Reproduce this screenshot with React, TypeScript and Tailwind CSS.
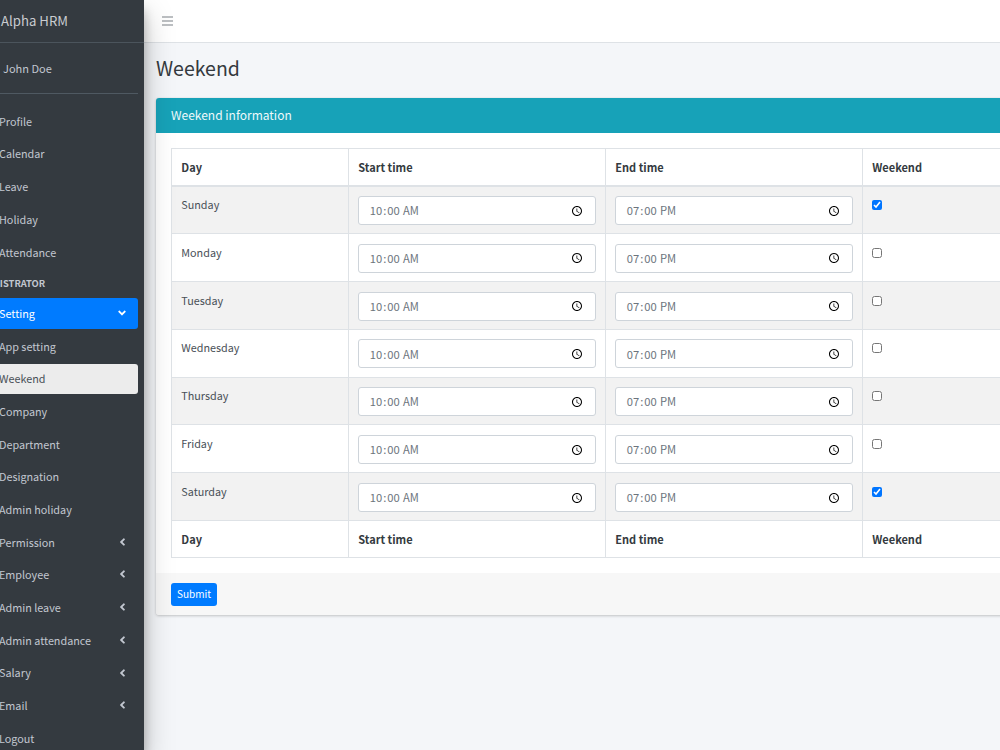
import React from "react";
import { FaAngleLeft, FaAngleDown } from "react-icons/fa";

const days: [string, boolean][] = [
  ["Sunday", true],
  ["Monday", false],
  ["Tuesday", false],
  ["Wednesday", false],
  ["Thursday", false],
  ["Friday", false],
  ["Saturday", true],
];

function NavItem({ label, arrow }: { label: string; arrow?: boolean }) {
  return (
    <a className="flex items-center justify-between h-[30.7px] mb-[2px] pb-[1px] pl-[105px] pr-[11px] text-[#c2c7d0]">
      <span>{label}</span>
      {arrow && <FaAngleLeft className="w-[9px] h-[12px] text-[#c2c7d0]" />}
    </a>
  );
}

function HeadRow({ top }: { top?: boolean }) {
  const c = "h-[37px] px-[9.3px] text-left align-middle font-bold text-[11px] text-[#343a40] border border-[#dee2e6]";
  return (
    <tr className="bg-white">
      <th className={c + (top ? " border-b-2" : "")}>Day</th>
      <th className={c + (top ? " border-b-2" : "")}>Start time</th>
      <th className={c + (top ? " border-b-2" : "")}>End time</th>
      <th className={c + (top ? " border-b-2" : "")}>Weekend</th>
    </tr>
  );
}

export default function App() {
  return (
    <div
      className="w-[1000px] h-[750px] overflow-hidden bg-[#f4f6f9] text-[10.8px] text-[#495057]"
      style={{ fontFamily: '"Noto Sans CJK SC", "Noto Sans", sans-serif' }}
    >
      <div className="flex w-[1250px] h-full -ml-[106px]">
        <aside className="relative z-10 w-[250px] shrink-0 h-full overflow-hidden bg-[#343a40] shadow-[0_14px_28px_rgba(0,0,0,0.25),0_10px_10px_rgba(0,0,0,0.22)]">
          <div className="h-[43px] pl-[107px] flex items-center text-[13.2px] text-[#c9ccd0] border-b border-[#4b545c]">Alpha HRM</div>
          <div className="mx-[6.5px] h-[51px] pl-[102.5px] flex items-center text-[11px] text-[#c2c7d0] border-b border-[#4f5962]">John Doe</div>
          <nav className="pt-[12px] pr-[6px]">
            {["Profile", "Calendar", "Leave", "Holiday", "Attendance"].map((l) => (
              <NavItem key={l} label={l} />
            ))}
            <div className="h-[28.7px] pb-[2px] pl-[75px] flex items-center text-[9.4px] font-bold text-[#c2c7d0]">ADMINISTRATOR</div>
            <a className="flex items-center justify-between h-[30.7px] mb-[2px] pb-[1px] pl-[105px] pr-[11px] rounded-[3px] bg-[#007bff] text-white">
              <span>Setting</span>
              <FaAngleDown className="w-[10px] h-[12px]" />
            </a>
            <NavItem label="App setting" />
            <a className="flex items-center h-[30.7px] mb-[2px] pb-[1px] pl-[105px] rounded-[3px] bg-[#ececec] text-[#495057]">Weekend</a>
            {["Company", "Department", "Designation", "Admin holiday"].map((l) => (
              <NavItem key={l} label={l} />
            ))}
            {["Permission", "Employee", "Admin leave", "Admin attendance", "Salary", "Email"].map((l) => (
              <NavItem key={l} label={l} arrow />
            ))}
            <NavItem label="Logout" />
          </nav>
        </aside>

        <main className="flex-1 min-w-0">
          <header className="h-[43px] bg-white border-b border-[#dee2e6] flex items-center pl-[18px]">
            <svg width="11" height="10" viewBox="0 0 11 10" className="text-[#7a8086]" fill="none" stroke="currentColor" strokeWidth="1.1">
              <path d="M0 1h11M0 5h11M0 9h11" />
            </svg>
          </header>
          <h1 className="pl-[12px] pt-[9.5px] h-[55px] text-[19.5px] leading-[29px] text-[#343a40]">Weekend</h1>
          <section className="ml-[12px] w-[1000px] rounded-[3px] bg-white shadow-[0_0_1px_rgba(0,0,0,0.125),0_1px_3px_rgba(0,0,0,0.2)]">
            <div className="h-[35px] pb-[1.5px] px-[15px] flex items-center bg-[#17a2b8] text-[#eef9fb] text-[12px] rounded-t-[3px]">Weekend information</div>
            <div className="pt-[15px] px-[15px] pb-[15px]">
              <table className="w-full table-fixed border-collapse">
                <colgroup>
                  <col className="w-[177px]" />
                  <col className="w-[257px]" />
                  <col className="w-[257px]" />
                  <col />
                </colgroup>
                <thead>
                  <HeadRow top />
                </thead>
                <tbody>
                  {days.map(([d, w], i) => (
                    <tr key={d} className={i % 2 === 0 ? "bg-[#f2f2f2]" : "bg-white"}>
                      <td className="h-[47.9px] px-[9.3px] pt-[9.8px] align-top border border-[#dee2e6]">{d}</td>
                      {["10:00", "19:00"].map((t) => (
                        <td key={t} className="h-[47.9px] px-[9.3px] align-top pt-[9.8px] border border-[#dee2e6]">
                          <input
                            type="time"
                            defaultValue={t}
                            className="block w-full h-[29px] pl-[9.5px] pr-[8.5px] rounded-[3px] border border-[#ced4da] bg-white text-[11.2px] text-[#6c757d]"
                          />
                        </td>
                      ))}
                      <td className="h-[47.9px] px-[9.3px] pt-[9.8px] align-top border border-[#dee2e6]">
                        <input type="checkbox" defaultChecked={w} className="block w-[10px] h-[10px] mt-[4px] accent-[#0075ff]" />
                      </td>
                    </tr>
                  ))}
                </tbody>
                <tfoot>
                  <HeadRow />
                </tfoot>
              </table>
            </div>
            <div className="h-[42px] px-[15px] pt-[9.5px] bg-[#f7f7f7] rounded-b-[3px]">
              <button className="h-[23.5px] pb-[1px] w-[46px] rounded-[3px] bg-[#007bff] text-white text-[10px]">Submit</button>
            </div>
          </section>
        </main>
      </div>
    </div>
  );
}
